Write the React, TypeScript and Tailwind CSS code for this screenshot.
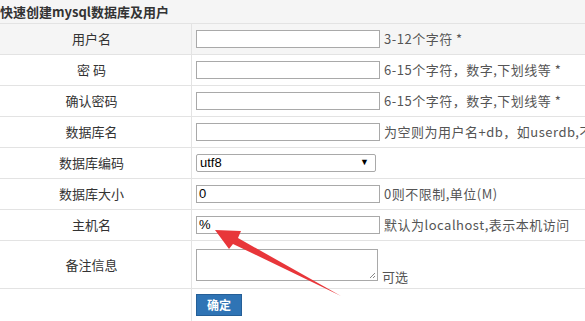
import React from 'react';

const cjk = { fontFamily: '"Noto Sans CJK SC", "Noto Sans", sans-serif' };
const arial = { fontFamily: '"Liberation Sans", Arial, sans-serif' };

function Row({ label, children, gray, tall }: { label: string; children: React.ReactNode; gray?: boolean; tall?: boolean }) {
    return (
        <div className={`flex border-b border-[#e3e3e3] ${tall ? 'h-[48px]' : 'h-[31px]'} ${gray ? 'bg-[#f5f5f5]' : 'bg-white'}`}>
            <div className="w-[192px] shrink-0 flex items-center justify-center pr-[8px] text-[13px] text-[#333] border-r border-[#e3e3e3]">
                {label}
            </div>
            <div className="flex items-center pl-[4px] whitespace-nowrap overflow-hidden min-w-0">{children}</div>
        </div>
    );
}

function Hint({ children }: { children: React.ReactNode }) {
    return <span className="ml-[4px] shrink-0 text-[13px] text-[#555] tracking-[0.5px]">{children}</span>;
}

function TextInput({ value = '' }: { value?: string }) {
    return (
        <div className="w-[184px] h-[18px] shrink-0 border border-[#a9a9a9] bg-white flex items-center px-[2px] text-[13px] text-black" style={arial}>
            {value}
        </div>
    );
}

export default function App() {
    return (
        <div className="relative w-[585px] h-[321px] overflow-hidden bg-white" style={cjk}>
            {/* Title bar */}
            <div className="h-[24px] bg-[#f5f5f5] border-b border-[#e3e3e3] flex items-center text-[13px] font-bold text-[#333]">
                快速创建mysql数据库及用户
            </div>

            <Row label="用户名" gray>
                <TextInput />
                <Hint>3-12个字符 *</Hint>
            </Row>
            <Row label="密 码">
                <TextInput />
                <Hint>6-15个字符，数字,下划线等 *</Hint>
            </Row>
            <Row label="确认密码">
                <TextInput />
                <Hint>6-15个字符，数字,下划线等 *</Hint>
            </Row>
            <Row label="数据库名">
                <TextInput />
                <Hint>为空则为用户名+db，如userdb,不填写</Hint>
            </Row>
            <Row label="数据库编码">
                <div className="w-[180px] h-[18px] shrink-0 border border-[#a9a9a9] rounded-[2px] bg-white flex items-center justify-between pl-[3px] pr-[6px] text-[13px] text-black" style={arial}>
                    <span>utf8</span>
                    <span className="text-[9px]">▼</span>
                </div>
            </Row>
            <Row label="数据库大小">
                <TextInput value="0" />
                <Hint>0则不限制,单位(M)</Hint>
            </Row>
            <Row label="主机名">
                <TextInput value="%" />
                <Hint>默认为localhost,表示本机访问</Hint>
            </Row>
            <Row label="备注信息" tall>
                <div className="flex items-end">
                    <div className="relative w-[182px] h-[32px] shrink-0 border border-[#a9a9a9] bg-white">
                        <svg className="absolute right-[1px] bottom-[1px]" width="7" height="7" viewBox="0 0 7 7">
                            <path d="M1 6L6 1M4 6L6 4" stroke="#888" strokeWidth="1" />
                        </svg>
                    </div>
                    <span className="ml-[4px] text-[13px] text-[#555] leading-[15px] -mb-[3px]">可选</span>
                </div>
            </Row>
            <div className="flex h-[32px]">
                <div className="w-[192px] shrink-0 border-r border-[#e3e3e3]" />
                <div className="flex items-center pl-[4px]">
                    <button className="w-[46px] h-[22px] bg-[#2f74b5] border border-[#255f97] text-white text-[12px] font-bold">
                        确定
                    </button>
                </div>
            </div>

            {/* red annotation arrow */}
            <svg className="absolute left-0 top-0 pointer-events-none" width="585" height="321" viewBox="0 0 585 321">
                <polygon points="215,230 241,231 238,238 341,296 233,244 229,249" fill="#e8363a" />
            </svg>
        </div>
    );
}
